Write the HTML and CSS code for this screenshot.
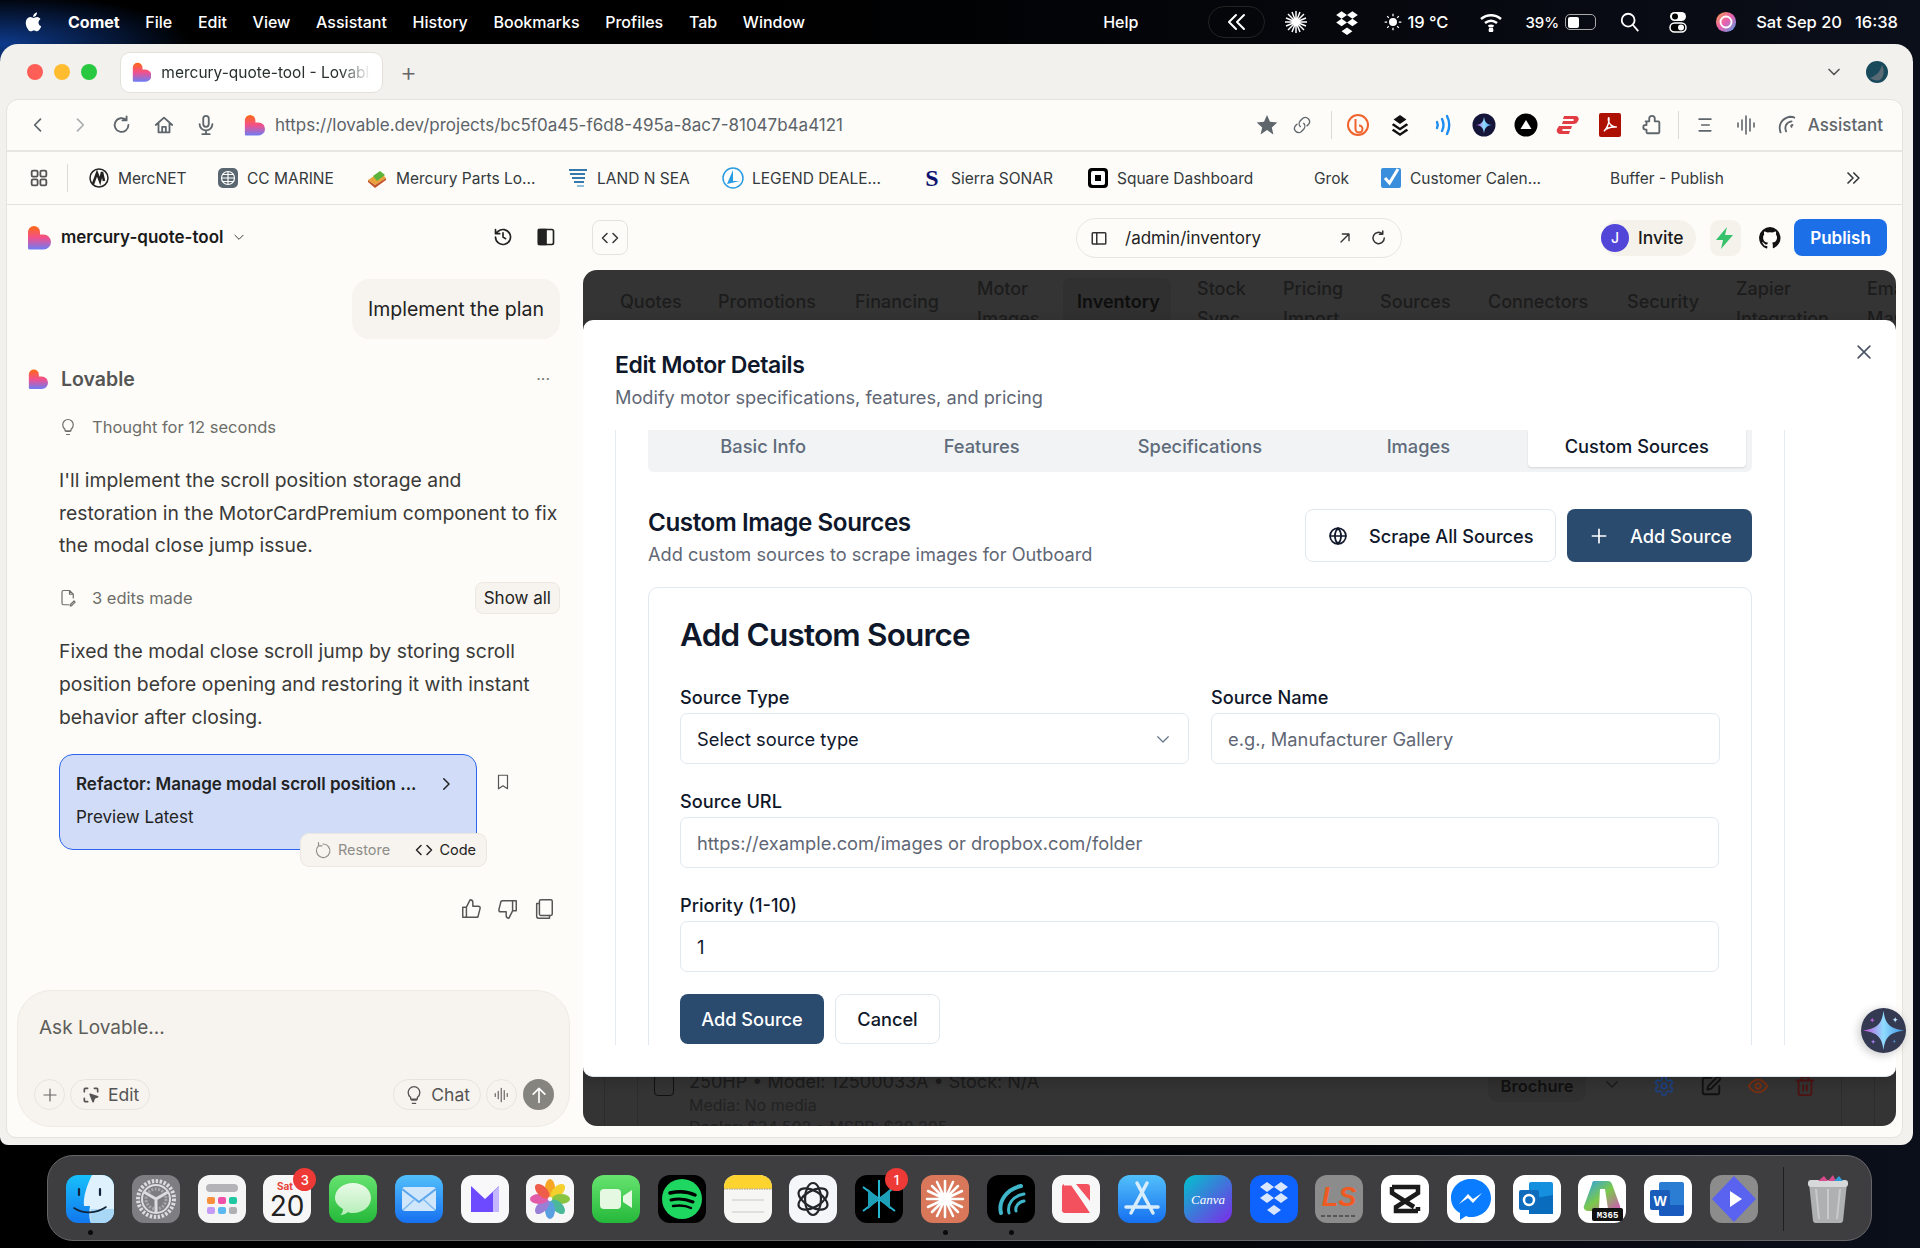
FILE: index.html
```html
<!DOCTYPE html>
<html lang="en">

<head>
    <meta charset="UTF-8">
    <meta name="viewport" content="width=device-width, initial-scale=1.0">
    <title>mercury-quote-tool - Lovable</title>
    <link rel="stylesheet" href="styles.css">
</head>

<body>
    <!-- shared shapes and gradients -->
    <svg class="sprite" aria-hidden="true">
        <defs>
            <linearGradient id="love" x1="0" y1="0" x2="0" y2="1">
                <stop offset="0" stop-color="#ff6a13" />
                <stop offset=".5" stop-color="#f2508c" />
                <stop offset="1" stop-color="#6d7cf5" />
            </linearGradient>
            <linearGradient id="skyblue" x1="0" y1="0" x2="0" y2="1">
                <stop offset="0" stop-color="#52c0fb" />
                <stop offset="1" stop-color="#1670f0" />
            </linearGradient>
            <linearGradient id="finder" x1="0" y1="0" x2="0" y2="1">
                <stop offset="0" stop-color="#17c0fb" />
                <stop offset="1" stop-color="#1277ee" />
            </linearGradient>
            <linearGradient id="green" x1="0" y1="0" x2="0" y2="1">
                <stop offset="0" stop-color="#66e36f" />
                <stop offset="1" stop-color="#25b83a" />
            </linearGradient>
            <linearGradient id="bubble" x1="0" y1="0" x2="0" y2="1">
                <stop offset="0" stop-color="#e9fae7" />
                <stop offset="1" stop-color="#b6eeb8" />
            </linearGradient>
            <linearGradient id="canva" x1="0" y1="0" x2="1" y2="1">
                <stop offset="0" stop-color="#00c4cc" />
                <stop offset="1" stop-color="#7d2ae8" />
            </linearGradient>
            <linearGradient id="copilot" x1="0" y1="0" x2="1" y2="1">
                <stop offset="0" stop-color="#2aa0f0" />
                <stop offset=".5" stop-color="#7bc94a" />
                <stop offset="1" stop-color="#d94fc0" />
            </linearGradient>
            <linearGradient id="siri" x1="0" y1="0" x2="1" y2="1">
                <stop offset="0" stop-color="#f7a04a" />
                <stop offset=".5" stop-color="#e85fb0" />
                <stop offset="1" stop-color="#4aa8f0" />
            </linearGradient>
            <linearGradient id="spark" x1="0" y1="0" x2="1" y2="0">
                <stop offset="0" stop-color="#c24fd6" />
                <stop offset=".5" stop-color="#8fdcff" />
                <stop offset="1" stop-color="#3c8fdc" />
            </linearGradient>
            <symbol id="heart" viewBox="0 0 24 24">
                <path fill="url(#love)" d="M1 6.500a6 6 0 0 1 12 0V9h3.500a7.500 7.500 0 0 1 0 15H2.500A1.500 1.500 0 0 1 1 22.500z" />
            </symbol>
            <symbol id="star4" viewBox="0 0 24 24">
                <path d="M12 1c1 7 3 10 11 11-8 1-10 4-11 11-1-7-3-10-11-11 8-1 10-4 11-11z" />
            </symbol>
        </defs>
    </svg>

    <header class="menubar">
        <svg class="apple" viewBox="0 0 20 24">
            <path fill="#fff" d="M14.500 12.500c0-2.400 2-3.500 2-3.600-1.100-1.600-2.800-1.800-3.400-1.900-1.500-.1-2.800.9-3.500.9s-1.900-.9-3.100-.9C4.900 7 3.400 8 2.600 9.400c-1.700 2.900-.4 7.200 1.200 9.500.8 1.200 1.700 2.400 3 2.400 1.200 0 1.600-.8 3.100-.8s1.800.8 3.100.8 2.100-1.100 2.900-2.300c.9-1.300 1.300-2.600 1.300-2.700-.1 0-2.700-1-2.700-3.800zM12 5.500c.7-.8 1.100-1.900 1-3-1 0-2.100.7-2.800 1.500-.6.700-1.100 1.800-1 2.900 1.100.1 2.200-.6 2.800-1.400z" />
        </svg>
        <nav class="menu">
            <strong>Comet</strong><span>File</span><span>Edit</span><span>View</span><span>Assistant</span><span>History</span><span>Bookmarks</span><span>Profiles</span><span>Tab</span><span>Window</span>
        </nav>
        <span class="help">Help</span>
        <div class="status">
            <span class="collapse-pill"><svg class="ico" viewBox="0 0 24 24" width="24" height="24">
                    <path d="M11 5l-7 7 7 7M19 5l-7 7 7 7" />
                </svg></span>
            <svg class="slot" viewBox="0 0 24 24" width="24" height="24" stroke="#fff" stroke-width="1.500">
                <path d="M12 1v22M1 12h22M4 4l16 16M20 4L4 20M8 2l8 20M16 2L8 22M2 8l20 8M22 8L2 16" />
            </svg>
            <svg class="slot drop" viewBox="0 0 24 24" width="26" height="26" fill="#fff">
                <path d="M7 2l5 3.500L7 9 2 5.500zM17 2l5 3.500L17 9l-5-3.500zM7 9l5 3.500L7 16l-5-3.500zM17 9l5 3.500L17 16l-5-3.500zM12 17l5 3.500-5 3.500-5-3.500z" />
            </svg>
            <span class="weather"><svg viewBox="0 0 24 24" width="20" height="20" fill="#fff" stroke="#fff" stroke-width="1.500">
                    <circle cx="12" cy="12" r="4" />
                    <path d="M12 2v3M12 19v3M2 12h3M19 12h3M5 5l2 2M17 17l2 2M19 5l-2 2M7 17l-2 2" />
                </svg>19 °C</span>
            <svg class="wifi" viewBox="0 0 24 20" width="26" height="20" fill="none" stroke="#fff" stroke-width="2.500">
                <path d="M2 7c6-5 14-5 20 0M6 11c4-3 8-3 12 0M9.500 14.500c2-1.300 3-1.300 5 0" />
                <circle cx="12" cy="18" r="1.200" fill="#fff" />
            </svg>
            <span class="batt-text">39%</span>
            <span class="battery"><i></i></span>
            <svg class="search" viewBox="0 0 24 24" width="22" height="22" fill="none" stroke="#fff" stroke-width="2">
                <circle cx="10" cy="10" r="7" />
                <path d="M15 15l6 7" />
            </svg>
            <svg class="toggles" viewBox="0 0 22 24" width="22" height="24">
                <rect x="3" y="2" width="16" height="9" rx="4.500" fill="#fff" />
                <circle cx="8" cy="6.500" r="3" fill="#000" />
                <rect x="3" y="13" width="16" height="9" rx="4.500" fill="#000" stroke="#fff" stroke-width="1.500" />
                <circle cx="14" cy="17.500" r="3" fill="#fff" />
            </svg>
            <svg class="siri" viewBox="0 0 24 24" width="22" height="22">
                <circle cx="12" cy="12" r="11" fill="url(#siri)" />
                <circle cx="12" cy="12" r="6" fill="none" stroke="#fff" stroke-width="2" />
            </svg>
            <span class="clock">Sat Sep 20</span><span class="clock-time">16:38</span>
        </div>
    </header>

    <div class="window">
        <div class="tabstrip">
            <span class="light red"></span><span class="light amber"></span><span class="light lime"></span>
            <div class="tab">
                <svg class="love" width="20" height="22">
                    <use href="#heart" />
                </svg>
                <span class="tab-title">mercury-quote-tool - Lovable</span>
            </div>
            <span class="new-tab">+</span>
            <svg class="tab-caret ico" viewBox="0 0 24 24" width="20" height="20">
                <path d="M6 9l6 6 6-6" />
            </svg>
            <svg class="profile" viewBox="0 0 24 24" width="24" height="24">
                <circle cx="12" cy="12" r="11" fill="#184a5c" />
                <path d="M5 18c6-2 10-6 12-13 3 5 2 12-2 15-3 1-7 0-10-2z" fill="#5a6a74" />
            </svg>
        </div>

        <div class="panel">
            <div class="toolbar">
                <span class="tool"><svg class="ico" viewBox="0 0 24 24" width="20" height="20">
                        <path d="M15 5l-7 7 7 7" />
                    </svg></span>
                <span class="tool dim"><svg class="ico" viewBox="0 0 24 24" width="20" height="20">
                        <path d="M9 5l7 7-7 7" />
                    </svg></span>
                <span class="tool"><svg class="ico" viewBox="0 0 24 24" width="22" height="22">
                        <path d="M19 12a7.500 7.500 0 1 1-2.500-5.600M17 2.500v4.500h-4.500" />
                    </svg></span>
                <span class="tool"><svg class="ico" viewBox="0 0 24 24" width="22" height="22">
                        <path d="M3 12l9-8 9 8M6 10v10h12V10M10 20v-6h4v6" />
                    </svg></span>
                <span class="tool"><svg class="ico" viewBox="0 0 24 24" width="22" height="22">
                        <rect x="9" y="2" width="6" height="12" rx="3" />
                        <path d="M5 11a7 7 0 0 0 14 0M12 18v4M8 22h8" />
                    </svg></span>
                <svg class="url-logo" width="21" height="24">
                    <use href="#heart" />
                </svg>
                <span class="url">https://lovable.dev/projects/bc5f0a45-f6d8-495a-8ac7-81047b4a4121</span>

                <div class="tool-right">
                    <span class="tool"><svg viewBox="0 0 24 24" width="24" height="24" fill="#5e656b">
                            <path d="M12 2l3 6.800 7.300.7-5.500 4.900 1.600 7.200L12 17l-6.400 4.600 1.600-7.200L1.700 9.500 9 8.800z" />
                        </svg></span>
                    <span class="tool narrow"><svg class="ico thin" viewBox="0 0 24 24" width="20" height="20">
                            <path d="M10 14a5 5 0 0 1 0-7l3-3a5 5 0 0 1 7 7l-2 2M14 10a5 5 0 0 1 0 7l-3 3a5 5 0 0 1-7-7l2-2" />
                        </svg></span>
                    <span class="vsep"></span>
                    <span class="tool"><svg viewBox="0 0 24 24" width="24" height="24" fill="none" stroke="#f0632e" stroke-width="2">
                            <circle cx="12" cy="12" r="10" />
                            <path d="M9.500 6v10a3.500 3.500 0 1 0 3.500-3.500" />
                        </svg></span>
                    <span class="tool"><svg viewBox="0 0 24 24" width="22" height="24" fill="#111">
                            <path d="M12 1l7 5-7 5-7-5zM5 10l7 5 7-5 2 2-9 6-9-6zM5 16l7 5 7-5 2 2-9 6-9-6z" />
                        </svg></span>
                    <span class="tool"><svg viewBox="0 0 24 24" width="24" height="24" fill="none" stroke="#1c8cf0" stroke-width="2.400" stroke-linecap="round">
                            <path d="M7 9c1 2 1 4 0 6M12 6c2 4 2 8 0 12M17 3c3 6 3 12 0 18" />
                        </svg></span>
                    <span class="tool"><svg viewBox="0 0 24 24" width="24" height="24">
                            <circle cx="12" cy="12" r="11.500" fill="#15153a" />
                            <use href="#star4" x="3" y="3" width="18" height="18" fill="url(#spark)" />
                        </svg></span>
                    <span class="tool"><svg viewBox="0 0 24 24" width="24" height="24">
                            <circle cx="12" cy="12" r="11.500" fill="#000" />
                            <path d="M12 7l5.500 9h-11z" fill="#fff" />
                        </svg></span>
                    <span class="tool"><svg viewBox="0 0 24 20" width="24" height="20" fill="#e23d44">
                            <path d="M8 1h12a3 3 0 0 1 2 5c-1 2-2 3-5 3H6l1-3h10c1 0 1-2 0-2H7zM3 11h13l-1 3H7c-1 0-1 2 0 2h7l-1 3H5c-3 0-5-2-4-5z" />
                        </svg></span>
                    <span class="tool"><svg viewBox="0 0 24 24" width="24" height="24">
                            <rect x="1" y="0" width="22" height="24" rx="2" fill="#ad0f00" />
                            <path d="M6 18c2-1 5-7 5-11s-1-2-.5 1 4 6 7 6-3-.5-7 1-4 3-4.500 3z" fill="none" stroke="#fff" stroke-width="1.500" />
                        </svg></span>
                    <span class="tool"><svg class="ico" viewBox="0 0 24 24" width="22" height="22">
                            <path d="M5 8h4V5a3 3 0 0 1 6 0v3h4a1 1 0 0 1 1 1v11a1 1 0 0 1-1 1H7a1 1 0 0 1-1-1v-3H5a2.500 2.500 0 0 1 0-5h1V9" />
                        </svg></span>
                    <span class="vsep"></span>
                    <span class="tool"><svg class="ico" viewBox="0 0 24 24" width="20" height="20">
                            <path d="M5 5h14M8 12h9M5 19h14" />
                        </svg></span>
                    <span class="tool"><svg class="ico thin" viewBox="0 0 24 24" width="24" height="24">
                            <path d="M3 10v4M7 7v10M11 3v18M15 6v12M19 10v4" />
                        </svg></span>
                    <svg class="ico assist-ico" viewBox="0 0 24 24" width="22" height="24">
                        <path d="M5 20c-3-8 1-15 10-17 2 0 4 0 5 1M11 19c-2-5 0-10 6-11M17 14c-1-1 0-2 1-2" />
                    </svg>
                    <span class="assistant">Assistant</span>
                </div>
            </div>

            <div class="bookmarks">
                <svg class="ico bm-grid" viewBox="0 0 24 24" width="22" height="22">
                    <rect x="4" y="4" width="6.500" height="6.500" rx="1.500" />
                    <rect x="13.500" y="4" width="6.500" height="6.500" rx="1.500" />
                    <rect x="4" y="13.500" width="6.500" height="6.500" rx="1.500" />
                    <rect x="13.500" y="13.500" width="6.500" height="6.500" rx="1.500" />
                </svg>
                <span class="vsep bm-sep"></span>
                <div class="bm-list">
                    <span class="bm"><svg viewBox="0 0 22 22" width="22" height="22" fill="none" stroke="#222" stroke-width="2.500">
                            <circle cx="11" cy="11" r="9" stroke-width="1.500" />
                            <path d="M5 17L9 6l3 8 2-9 2 9" />
                        </svg>MercNET</span>
                    <span class="bm"><svg viewBox="0 0 22 22" width="22" height="22">
                            <rect x="1" y="1" width="20" height="20" rx="5" fill="#5b6770" />
                            <g fill="none" stroke="#fff" stroke-width="1.200">
                                <circle cx="11" cy="11" r="6.500" />
                                <path d="M4.500 11h13M11 4.500v13M6 7.500h10M6 14.500h10" />
                            </g>
                        </svg>CC MARINE</span>
                    <span class="bm"><svg viewBox="0 0 22 22" width="22" height="22">
                            <path d="M2 13l12-8 6 6-11 7z" fill="#e8a33a" />
                            <path d="M7 9l7-5 5 4-8 6z" fill="#5cb33c" />
                            <path d="M2 13l7 5 11-7v2L9 21l-7-6z" fill="#c3552b" />
                        </svg>Mercury Parts Lo...</span>
                    <span class="bm"><svg viewBox="0 0 22 22" width="22" height="22" fill="none" stroke="#3579ac" stroke-width="2">
                            <path d="M2 3h18M3 7h15M5 11h13M7 15h10" />
                            <path d="M10 19h7" stroke="#8cc0de" />
                        </svg>LAND N SEA</span>
                    <span class="bm"><svg viewBox="0 0 22 22" width="22" height="22">
                            <circle cx="11" cy="11" r="10" fill="#fff" stroke="#2a9be0" stroke-width="1.500" />
                            <path d="M11 3L5 17l13-3-7 0z" fill="#2a9be0" />
                        </svg>LEGEND DEALE...</span>
                    <span class="bm"><b class="bm-s">S</b>Sierra SONAR</span>
                    <span class="bm"><svg viewBox="0 0 22 22" width="22" height="22">
                            <rect x="1" y="1" width="20" height="20" rx="4" fill="#000" />
                            <rect x="4" y="4" width="14" height="14" rx="2" fill="#fff" />
                            <rect x="8" y="8" width="6" height="6" fill="#000" />
                        </svg>Square Dashboard</span>
                    <span class="bm"><i class="bm-blank"></i>Grok</span>
                    <span class="bm"><svg viewBox="0 0 22 22" width="22" height="22">
                            <rect x="1" y="1" width="20" height="20" rx="2" fill="#3a8fdc" />
                            <path d="M5 11l4.500 5L18 2" fill="none" stroke="#fff" stroke-width="3" />
                        </svg>Customer Calen...</span>
                    <span class="bm"><i class="bm-blank"></i>Buffer - Publish</span>
                    <svg class="ico" viewBox="0 0 24 24" width="20" height="20">
                        <path d="M6 6l6 6-6 6M13 6l6 6-6 6" />
                    </svg>
                </div>
            </div>

            <div class="app">
                <!-- chat column -->
                <aside class="chat">
                    <div class="chat-head">
                        <svg class="chat-logo" width="24" height="25">
                            <use href="#heart" />
                        </svg>
                        <span class="project">mercury-quote-tool</span>
                        <svg class="ico thin" viewBox="0 0 24 24" width="14" height="14">
                            <path d="M5 9l7 7 7-7" />
                        </svg>
                        <svg class="ico head-history" viewBox="0 0 24 24" width="20" height="20">
                            <path d="M3 12a9 9 0 1 0 3-6.700L3 8M3 3v5h5M12 7v5l3 2" />
                        </svg>
                        <svg class="ico head-side" viewBox="0 0 24 24" width="20" height="20">
                            <rect x="3" y="3" width="18" height="18" rx="2" />
                            <rect x="3" y="3" width="9" height="18" fill="currentColor" />
                        </svg>
                    </div>

                    <div class="bubble">Implement the plan</div>

                    <div class="who">
                        <svg width="20" height="20">
                            <use href="#heart" />
                        </svg>
                        <span class="who-name">Lovable</span>
                        <span class="who-more">···</span>
                    </div>

                    <div class="thought">
                        <svg class="ico thin" viewBox="0 0 24 24" width="18" height="20">
                            <path d="M9 18h6M10 22h4M8 15c-2-1.500-3-3.500-3-6a7 7 0 0 1 14 0c0 2.500-1 4.500-3 6v2H8z" />
                        </svg>
                        Thought for 12 seconds
                    </div>

                    <p class="msg">I'll implement the scroll position storage and restoration in the MotorCardPremium component to fix the modal close jump issue.</p>

                    <div class="edits">
                        <svg class="ico thin" viewBox="0 0 24 24" width="18" height="20">
                            <path d="M13 21H6a2 2 0 0 1-2-2V4a2 2 0 0 1 2-2h8l5 5v5M14 2v5h5M15 21l5-5 1.500 1.500-5 5H15z" />
                        </svg>
                        <span class="edits-text">3 edits made</span>
                        <span class="show-all">Show all</span>
                    </div>

                    <p class="msg second">Fixed the modal close scroll jump by storing scroll position before opening and restoring it with instant behavior after closing.</p>

                    <div class="version-row">
                        <div class="version">
                            <div class="version-top">
                                <strong>Refactor: Manage modal scroll position ...</strong>
                                <svg class="ico" viewBox="0 0 24 24" width="18" height="18">
                                    <path d="M9 5l7 7-7 7" />
                                </svg>
                            </div>
                            <span class="version-sub">Preview Latest</span>
                            <div class="version-actions">
                                <span class="restore"><svg class="ico thin" viewBox="0 0 24 24" width="18" height="18">
                                        <path d="M12 4a9 9 0 1 1-6 2.500M6 2v4.500h4.500" />
                                    </svg>Restore</span>
                                <span class="code"><svg class="ico" viewBox="0 0 24 24" width="18" height="18">
                                        <path d="M8 6l-6 6 6 6M16 6l6 6-6 6" />
                                    </svg>Code</span>
                            </div>
                        </div>
                        <svg class="ico thin" viewBox="0 0 24 24" width="18" height="20">
                            <path d="M6 3h12v18l-6-4-6 4z" />
                        </svg>
                    </div>

                    <div class="msg-actions">
                        <svg class="ico thin" viewBox="0 0 24 24" width="22" height="22">
                            <path d="M7 10v11H3V10zM7 10l4-8c2 0 3 1 3 3v4h6a2 2 0 0 1 2 2l-2 8a2 2 0 0 1-2 2H7" />
                        </svg>
                        <svg class="ico thin" viewBox="0 0 24 24" width="22" height="22">
                            <path d="M17 14V3h4v11zM17 14l-4 8c-2 0-3-1-3-3v-4H4a2 2 0 0 1-2-2l2-8a2 2 0 0 1 2-2h11" />
                        </svg>
                        <svg class="ico thin" viewBox="0 0 24 24" width="22" height="22">
                            <rect x="7" y="2" width="14" height="17" rx="1.500" />
                            <path d="M7 6H4v14a2 2 0 0 0 2 2h12v-3" />
                        </svg>
                    </div>

                    <div class="composer">
                        <div class="ask">Ask Lovable...</div>
                        <div class="composer-bar">
                            <span class="round"><svg class="ico thin" viewBox="0 0 24 24" width="18" height="18">
                                    <path d="M12 4v16M4 12h16" />
                                </svg></span>
                            <span class="chip edit-chip"><svg class="ico" viewBox="0 0 24 24" width="20" height="20">
                                    <path d="M4 8V5a1 1 0 0 1 1-1h3M16 4h3a1 1 0 0 1 1 1v3M4 16v3a1 1 0 0 0 1 1h3" />
                                    <path d="M11 11l9 3-4 1.500-1.500 4.500z" fill="currentColor" />
                                </svg>Edit</span>
                            <span class="chip chat-chip"><svg class="ico thin" viewBox="0 0 24 24" width="20" height="20">
                                    <path d="M9 18h6M10 22h4M8 15c-2-1.500-3-3.500-3-6a7 7 0 0 1 14 0c0 2.500-1 4.500-3 6v2H8z" />
                                </svg>Chat</span>
                            <span class="round"><svg class="ico thin" viewBox="0 0 24 24" width="18" height="18">
                                    <path d="M3 10v4M7 7v10M11 3v18M15 6v12M19 10v4" />
                                </svg></span>
                            <span class="send"><svg class="ico white" viewBox="0 0 24 24" width="20" height="20">
                                    <path d="M12 21V4M5 11l7-7 7 7" />
                                </svg></span>
                        </div>
                    </div>
                </aside>

                <!-- preview column -->
                <section class="stage">
                    <div class="stage-bar">
                        <span class="code-btn"><svg class="ico" viewBox="0 0 24 24" width="18" height="18">
                                <path d="M8 6l-6 6 6 6M16 6l6 6-6 6" />
                            </svg></span>
                        <div class="addr">
                            <svg class="ico" viewBox="0 0 24 24" width="18" height="18">
                                <rect x="3" y="5" width="18" height="15" rx="1" />
                                <path d="M9 5v15" />
                            </svg>
                            <span class="addr-text">/admin/inventory</span>
                            <svg class="ico addr-out" viewBox="0 0 24 24" width="16" height="16">
                                <path d="M6 18L18 6M8 6h10v10" />
                            </svg>
                            <svg class="ico" viewBox="0 0 24 24" width="18" height="18">
                                <path d="M19 12a7.500 7.500 0 1 1-2.500-5.600M17 2.500v4.500h-4.500" />
                            </svg>
                        </div>
                        <div class="invite"><span class="avatar">J</span>Invite</div>
                        <span class="bolt"><svg viewBox="0 0 24 24" width="24" height="24" fill="#35c26b">
                                <path d="M14 1L3 14h7l-2 9 12-14h-8z" />
                            </svg></span>
                        <svg class="github" viewBox="0 0 24 24" width="24" height="24" fill="#111">
                            <path d="M12 1a11 11 0 0 0-3.500 21.400c.6.100.8-.2.800-.5v-2c-3.100.7-3.700-1.400-3.700-1.400-.5-1.300-1.200-1.600-1.200-1.600-1-.7.1-.7.100-.7 1.100.1 1.700 1.100 1.700 1.100 1 1.700 2.600 1.200 3.200.9.100-.7.400-1.200.7-1.500-2.400-.3-5-1.200-5-5.400 0-1.200.4-2.200 1.100-2.900-.1-.3-.5-1.400.1-2.900 0 0 .9-.3 3 1.100a10.400 10.400 0 0 1 5.500 0c2.100-1.400 3-1.100 3-1.100.6 1.500.2 2.600.1 2.900.7.800 1.100 1.700 1.100 2.900 0 4.200-2.600 5.100-5 5.400.4.300.8 1 .8 2v3c0 .3.200.6.800.5A11 11 0 0 0 12 1z" />
                        </svg>
                        <span class="publish">Publish</span>
                    </div>

                    <div class="preview">
                        <nav class="dark-nav">
                            <span>Quotes</span><span>Promotions</span><span>Financing</span><span>Motor Images</span><span class="on">Inventory</span><span>Stock Sync</span><span>Pricing Import</span><span>Sources</span><span>Connectors</span><span>Security</span><span>Zapier Integration</span><span>Email Management</span>
                        </nav>

                        <div class="dark-list">
                            <div class="dark-row">
                                <i class="dark-check"></i>
                                <div class="dark-info">
                                    <div>250HP • Model: 12500033A • Stock: N/A</div>
                                    <div class="dark-small">Media: No media</div>
                                    <div class="dark-small">Dealer: $34,502 • MSRP: $39,205</div>
                                </div>
                                <span class="dark-pill">Brochure</span>
                                <svg class="ico dark-caret" viewBox="0 0 24 24" width="18" height="18">
                                    <path d="M5 9l7 7 7-7" />
                                </svg>
                                <svg class="ico d-gear" viewBox="0 0 24 24" width="22" height="22">
                                    <path d="M12.220 2h-.44a2 2 0 0 0-2 2v.18a2 2 0 0 1-1 1.730l-.43.25a2 2 0 0 1-2 0l-.15-.08a2 2 0 0 0-2.730.73l-.22.38a2 2 0 0 0 .73 2.730l.15.1a2 2 0 0 1 1 1.720v.51a2 2 0 0 1-1 1.740l-.15.09a2 2 0 0 0-.73 2.730l.22.38a2 2 0 0 0 2.730.73l.15-.08a2 2 0 0 1 2 0l.43.25a2 2 0 0 1 1 1.730V20a2 2 0 0 0 2 2h.44a2 2 0 0 0 2-2v-.18a2 2 0 0 1 1-1.730l.43-.25a2 2 0 0 1 2 0l.15.08a2 2 0 0 0 2.730-.73l.22-.39a2 2 0 0 0-.73-2.730l-.15-.08a2 2 0 0 1-1-1.740v-.5a2 2 0 0 1 1-1.740l.15-.09a2 2 0 0 0 .73-2.730l-.22-.38a2 2 0 0 0-2.730-.73l-.15.08a2 2 0 0 1-2 0l-.43-.25a2 2 0 0 1-1-1.730V4a2 2 0 0 0-2-2z" />
                                    <circle cx="12" cy="12" r="3" />
                                </svg>
                                <svg class="ico d-edit" viewBox="0 0 24 24" width="22" height="22">
                                    <path d="M12 3H5a2 2 0 0 0-2 2v14a2 2 0 0 0 2 2h14a2 2 0 0 0 2-2v-7" />
                                    <path d="M18.400 2.600a1 1 0 0 1 3 3l-9 9a2 2 0 0 1-.85.5l-2.900.85a.5.5 0 0 1-.6-.6l.84-2.900a2 2 0 0 1 .5-.85z" />
                                </svg>
                                <svg class="ico d-eye" viewBox="0 0 24 24" width="22" height="22">
                                    <path d="M2 12s3.500-7 10-7 10 7 10 7-3.500 7-10 7-10-7-10-7z" />
                                    <circle cx="12" cy="12" r="3" />
                                </svg>
                                <svg class="ico d-trash" viewBox="0 0 24 24" width="22" height="22">
                                    <path d="M3 6h18M19 6v14a2 2 0 0 1-2 2H7a2 2 0 0 1-2-2V6M8 6V4a2 2 0 0 1 2-2h4a2 2 0 0 1 2 2v2M10 11v6M14 11v6" />
                                </svg>
                            </div>
                        </div>

                        <!-- dialog on top of the dimmed page -->
                        <div class="modal">
                            <div class="modal-head">
                                <h2>Edit Motor Details</h2>
                                <p>Modify motor specifications, features, and pricing</p>
                                <svg class="ico modal-x" viewBox="0 0 24 24" width="20" height="20">
                                    <path d="M5 5l14 14M19 5L5 19" />
                                </svg>
                            </div>
                            <div class="modal-scroll">
                                <div class="modal-card">
                                    <div class="tabs">
                                        <span>Basic Info</span><span>Features</span><span>Specifications</span><span>Images</span><span class="active">Custom Sources</span>
                                    </div>

                                    <div class="source-head">
                                        <div>
                                            <h3>Custom Image Sources</h3>
                                            <p>Add custom sources to scrape images for Outboard</p>
                                        </div>
                                        <div class="source-btns">
                                            <span class="btn outline"><svg class="ico" viewBox="0 0 24 24" width="20" height="20">
                                                    <circle cx="12" cy="12" r="9.500" />
                                                    <path d="M2.500 12h19M12 2.500c-5 5-5 14 0 19M12 2.500c5 5 5 14 0 19" />
                                                </svg>Scrape All Sources</span>
                                            <span class="btn solid"><svg class="ico white" viewBox="0 0 24 24" width="20" height="20">
                                                    <path d="M12 4v16M4 12h16" />
                                                </svg>Add Source</span>
                                        </div>
                                    </div>

                                    <form class="form-card">
                                        <h3>Add Custom Source</h3>
                                        <div class="form-two">
                                            <div class="field">
                                                <label>Source Type</label>
                                                <div class="input select">Select source type
                                                    <svg class="ico thin" viewBox="0 0 24 24" width="18" height="18">
                                                        <path d="M5 9l7 7 7-7" />
                                                    </svg>
                                                </div>
                                            </div>
                                            <div class="field">
                                                <label>Source Name</label>
                                                <div class="input ph">e.g., Manufacturer Gallery</div>
                                            </div>
                                        </div>
                                        <div class="field">
                                            <label>Source URL</label>
                                            <div class="input ph">https://example.com/images or dropbox.com/folder</div>
                                        </div>
                                        <div class="field">
                                            <label>Priority (1-10)</label>
                                            <div class="input">1</div>
                                        </div>
                                        <div class="form-btns">
                                            <span class="btn solid plain">Add Source</span>
                                            <span class="btn outline plain">Cancel</span>
                                        </div>
                                    </form>
                                </div>
                            </div>
                        </div>
                    </div>
                </section>
            </div>
        </div>
    </div>

    <!-- floating helper over the window corner -->
    <div class="float-star">
        <svg viewBox="0 0 48 48" width="45" height="45">
            <circle cx="24" cy="24" r="24" fill="#343a52" />
            <path d="M24 3c1.500 13 6 19 22 21-16 2-20.500 8-22 21-1.500-13-6-19-22-21 16-2 20.500-8 22-21z" fill="url(#spark)" />
            <use href="#star4" x="33" y="9" width="7" height="7" fill="#bfe4ff" />
            <use href="#star4" x="9" y="10" width="6" height="6" fill="#b95fd8" />
            <use href="#star4" x="10" y="33" width="6" height="6" fill="#a97cf0" />
            <use href="#star4" x="33" y="33" width="5" height="5" fill="#4e8fd0" />
        </svg>
    </div>

    <footer class="dock">
        <svg viewBox="0 0 48 48">
            <rect width="48" height="48" rx="12" fill="url(#finder)" />
            <path d="M26 0h10a12 12 0 0 1 12 12v24a12 12 0 0 1-12 12H25c-2-4-2-10-1-17h-6c-1-9 3-21 8-31z" fill="#dff1fc" />
            <path d="M25 34h23v2a12 12 0 0 1-12 12H25c-1-4-1-9 0-14z" fill="#a9d8f7" />
            <path d="M8 33c9 6 22 6 32-1" fill="none" stroke="#12243a" stroke-width="1.600" stroke-linecap="round" />
            <path d="M13 14v6M34 14v6" stroke="#12243a" stroke-width="2.200" stroke-linecap="round" />
        </svg>
        <svg viewBox="0 0 48 48">
            <rect width="48" height="48" rx="12" fill="#7e7e82" />
            <circle cx="24" cy="24" r="18" fill="none" stroke="#dcdcdf" stroke-width="4" stroke-dasharray="2.400 1.600" />
            <circle cx="24" cy="24" r="14" fill="none" stroke="#dcdcdf" stroke-width="2" />
            <circle cx="24" cy="24" r="10" fill="none" stroke="#a8a8ac" stroke-width="3" stroke-dasharray="2 1.500" />
            <path d="M24 24V38M24 24L12 17M24 24l12-7" stroke="#dcdcdf" stroke-width="3" />
        </svg>
        <svg viewBox="0 0 48 48">
            <rect width="48" height="48" rx="12" fill="#f5f5f6" />
            <rect x="8" y="9" width="32" height="8" rx="4" fill="#b4b4b8" />
            <rect x="9" y="22" width="8" height="7" rx="2" fill="#f78f3c" />
            <rect x="20" y="22" width="8" height="7" rx="2" fill="#f050a8" />
            <rect x="31" y="22" width="8" height="7" rx="2" fill="#1fc8a0" />
            <rect x="9" y="32" width="8" height="7" rx="2" fill="#c49cf5" />
            <rect x="20" y="32" width="8" height="7" rx="2" fill="#5cb8f0" />
            <rect x="31" y="32" width="8" height="7" rx="2" fill="#b0b0b2" />
        </svg>
        <div class="dock-cal">
            <svg viewBox="0 0 48 48">
                <rect width="48" height="48" rx="12" fill="#f7f7f7" />
                <text x="22" y="15" class="cal-day">Sat</text>
                <text x="24" y="41" class="cal-num">20</text>
            </svg>
            <span class="badge">3</span>
        </div>
        <svg viewBox="0 0 48 48">
            <rect width="48" height="48" rx="12" fill="url(#green)" />
            <path d="M24 8c10 0 18 6.500 18 15s-8 15-18 15c-2 0-3 0-5-1-2 2-5 3-8 3 2-1 3-4 3-6-5-3-8-7-8-11C6 14.500 14 8 24 8z" fill="url(#bubble)" />
        </svg>
        <svg viewBox="0 0 48 48">
            <rect width="48" height="48" rx="12" fill="url(#skyblue)" />
            <rect x="7" y="12" width="34" height="24" rx="3" fill="#cfe6fb" />
            <path d="M7 14l17 13 17-13" fill="none" stroke="#5aa5ee" stroke-width="2" />
            <path d="M8 35l12-11M40 35L28 24" stroke="#7fbaf2" stroke-width="1.500" />
        </svg>
        <svg viewBox="0 0 48 48">
            <rect width="48" height="48" rx="12" fill="#f8f8fa" />
            <path d="M10 11l14 13 14-13v26H10z" fill="#6d4aff" />
            <path d="M38 11v26h-6V17z" fill="#c4b6ff" />
        </svg>
        <svg class="photos" viewBox="0 0 48 48">
            <rect width="48" height="48" rx="12" fill="#f7f7f7" />
            <g>
                <ellipse cx="24" cy="13" rx="5" ry="9" fill="#f6a623" />
                <ellipse cx="24" cy="13" rx="5" ry="9" fill="#f5cf2e" transform="rotate(45 24 24)" />
                <ellipse cx="24" cy="13" rx="5" ry="9" fill="#8ac541" transform="rotate(90 24 24)" />
                <ellipse cx="24" cy="13" rx="5" ry="9" fill="#4bb89a" transform="rotate(135 24 24)" />
                <ellipse cx="24" cy="13" rx="5" ry="9" fill="#5a9fe0" transform="rotate(180 24 24)" />
                <ellipse cx="24" cy="13" rx="5" ry="9" fill="#9a7fd6" transform="rotate(225 24 24)" />
                <ellipse cx="24" cy="13" rx="5" ry="9" fill="#e05ca8" transform="rotate(270 24 24)" />
                <ellipse cx="24" cy="13" rx="5" ry="9" fill="#ee5d4a" transform="rotate(315 24 24)" />
            </g>
        </svg>
        <svg viewBox="0 0 48 48">
            <rect width="48" height="48" rx="12" fill="url(#green)" />
            <rect x="8" y="14" width="21" height="20" rx="4" fill="#e4f8e2" />
            <path d="M31 21l9-6v18l-9-6z" fill="#e4f8e2" />
        </svg>
        <svg viewBox="0 0 48 48">
            <rect width="48" height="48" rx="12" fill="#000" />
            <circle cx="24" cy="24" r="20" fill="#1ed760" />
            <g fill="none" stroke="#000" stroke-linecap="round">
                <path d="M12 18c8-2 17-2 25 2" stroke-width="3.500" />
                <path d="M13 25c7-2 15-1 22 2" stroke-width="3" />
                <path d="M15 31c6-1 12-1 18 2" stroke-width="2.500" />
            </g>
        </svg>
        <svg viewBox="0 0 48 48">
            <rect width="48" height="48" rx="12" fill="#f6f6f4" />
            <path d="M0 14V12A12 12 0 0 1 12 0h24a12 12 0 0 1 12 12v2z" fill="#fdd32f" />
            <path d="M0 14h48" stroke="#b9b39b" stroke-width="1.500" stroke-dasharray="1.500 1" />
            <path d="M8 25h32M8 37h32" stroke="#c8c8c6" stroke-width="1" />
        </svg>
        <svg viewBox="0 0 48 48">
            <rect width="48" height="48" rx="12" fill="#f4f6fa" />
            <g fill="none" stroke="#23262b" stroke-width="2.200">
                <ellipse cx="24" cy="24" rx="8" ry="16" />
                <ellipse cx="24" cy="24" rx="8" ry="16" transform="rotate(60 24 24)" />
                <ellipse cx="24" cy="24" rx="8" ry="16" transform="rotate(120 24 24)" />
            </g>
        </svg>
        <div class="dock-cal">
            <svg viewBox="0 0 48 48">
                <rect width="48" height="48" rx="12" fill="#000" />
                <path d="M24 5v38M8 12l16 12 16-12M8 36l16-12 16 12" stroke="#26b6cf" stroke-width="2" />
                <path d="M13 14l11 10 11-10v20L24 24 13 34z" fill="#1d9fb8" />
            </svg>
            <span class="badge">1</span>
        </div>
        <svg viewBox="0 0 48 48">
            <rect width="48" height="48" rx="12" fill="#d9775a" />
            <path d="M24 6v36M6 24h36M11 11l26 26M37 11L11 37M16 7l16 34M32 7L16 41M7 16l34 16M41 16L7 32" stroke="#fff" stroke-width="2.500" stroke-linecap="round" />
        </svg>
        <svg viewBox="0 0 48 48">
            <rect width="48" height="48" rx="12" fill="#000" />
            <g fill="none" stroke="#3fb5c9" stroke-width="4" stroke-linecap="round">
                <path d="M14 38c-3-12 6-24 20-27" />
                <path d="M22 38c-2-8 3-17 15-19" stroke-width="3" />
                <path d="M29 36c-1-4 2-9 8-10" stroke-width="3" />
            </g>
        </svg>
        <svg viewBox="0 0 48 48">
            <rect width="48" height="48" rx="12" fill="#f7f7f7" />
            <path d="M10 34V12a3 3 0 0 1 3-3h6l19 29h-25a3 3 0 0 1-3-4z" fill="#f4515f" />
            <path d="M24 9h11a3 3 0 0 1 3 3v14z" fill="#f4515f" />
            <path d="M12 9h8l19 27" fill="none" stroke="#f7f7f7" stroke-width="3" />
        </svg>
        <svg viewBox="0 0 48 48">
            <rect width="48" height="48" rx="12" fill="url(#skyblue)" />
            <path d="M29 8L13 38M19 8l16 30M8 32h32" stroke="#d7ecfd" stroke-width="3.500" stroke-linecap="round" />
        </svg>
        <svg viewBox="0 0 48 48">
            <rect width="48" height="48" rx="12" fill="url(#canva)" />
            <text x="24" y="29" class="canva">Canva</text>
        </svg>
        <svg viewBox="0 0 48 48">
            <rect width="48" height="48" rx="12" fill="#0e62fe" />
            <g fill="#d8e6ff">
                <path d="M17 7l7 5-7 5-7-5zM31 7l7 5-7 5-7-5zM17 18l7 5-7 5-7-5zM31 18l7 5-7 5-7-5zM24 30l7 5-7 5-7-5z" />
            </g>
        </svg>
        <svg viewBox="0 0 48 48">
            <rect width="48" height="48" rx="12" fill="#8c8c8c" />
            <text x="24" y="31" class="ls">LS</text>
            <path d="M6 41h36" stroke="#444" stroke-width="1.500" stroke-dasharray="4 2" />
        </svg>
        <svg viewBox="0 0 48 48">
            <rect width="48" height="48" rx="12" fill="#fff" />
            <path d="M11 12h26v6L15 32v4h22M11 12v6l22 14M37 36v-4" fill="none" stroke="#1b1b1b" stroke-width="4.500" />
        </svg>
        <svg viewBox="0 0 48 48">
            <rect width="48" height="48" rx="12" fill="#fff" />
            <path d="M24 4c11 0 20 8 20 19S35 42 24 42c-2 0-3 0-5-1l-6 4v-7C7 35 4 29 4 23 4 12 13 4 24 4z" fill="#0a7cff" />
            <path d="M12 29l9-10 5 5 9-6-9 10-5-5z" fill="#fff" />
        </svg>
        <svg viewBox="0 0 48 48">
            <rect width="48" height="48" rx="12" fill="#fff" />
            <rect x="16" y="7" width="24" height="32" rx="2" fill="#1490df" />
            <path d="M16 24l24-4v19H16z" fill="#0a6cbd" />
            <rect x="6" y="15" width="20" height="20" rx="2" fill="#0f6cbd" />
            <circle cx="16" cy="25" r="5" fill="none" stroke="#fff" stroke-width="2.500" />
        </svg>
        <svg viewBox="0 0 48 48">
            <rect width="48" height="48" rx="12" fill="#fff" />
            <path d="M16 6h14c2 0 3 1 4 3l8 22c1 3-1 5-4 5H10c-3 0-5-3-4-5l8-22c0-2 1-3 2-3z" fill="url(#copilot)" />
            <path d="M22 14h5l3 20h-9z" fill="#fff" />
            <rect x="14" y="33" width="31" height="13" rx="2" fill="#111" />
            <text x="29.500" y="43" class="m365">M365</text>
        </svg>
        <svg viewBox="0 0 48 48">
            <rect width="48" height="48" rx="12" fill="#fff" />
            <rect x="15" y="7" width="25" height="34" rx="2" fill="#2b7cd3" />
            <path d="M15 30h25v9a2 2 0 0 1-2 2H17a2 2 0 0 1-2-2z" fill="#185abd" />
            <rect x="6" y="15" width="20" height="20" rx="2" fill="#1a5cba" />
            <text x="16" y="31" class="word">W</text>
        </svg>
        <svg viewBox="0 0 48 48">
            <rect width="48" height="48" rx="12" fill="#8c8c8c" />
            <path d="M24 1l22 23-22 23L2 24z" fill="#5a63f0" />
            <path d="M20 16l12 8-12 8z" fill="#fff" />
        </svg>
        <span class="dock-sep"></span>
        <svg class="trash" viewBox="0 0 48 48">
            <path d="M5 8h38l-4 38a3 3 0 0 1-3 2H12a3 3 0 0 1-3-2z" fill="#aeb0b2" />
            <path d="M12 14l3 30M24 14v30M36 14l-3 30" stroke="#c8cacc" stroke-width="2" />
            <rect x="4" y="5" width="40" height="7" rx="3" fill="#d6d8da" />
            <path d="M14 6l6-5 4 5zM24 6l5-6 3 6z" fill="#d64b8c" />
            <path d="M30 6l5-5 4 5z" fill="#2f9bd8" />
        </svg>
        <i class="dot dot-a"></i><i class="dot dot-b"></i><i class="dot dot-c"></i>
    </footer>
</body>

</html>
```

FILE: styles.css
```css
* {
    box-sizing: border-box;
}

html,
body {
    margin: 0;
    height: 100%;
}

body {
    position: relative;
    width: 1920px;
    height: 1248px;
    overflow: hidden;
    display: flex;
    flex-direction: column;
    font-family: Inter, "Liberation Sans", sans-serif;
    color: #1a1a1a;
    background:
        radial-gradient(ellipse 190px 50px at 0 44px, #0e3a8c, rgba(14, 58, 140, 0) 100%),
        linear-gradient(90deg, #000 40%, #0b0f1a);
}

p,
h2,
h3 {
    margin: 0;
}

.sprite {
    display: block;
    width: 0;
    height: 0;
    overflow: hidden;
}

.ico {
    fill: none;
    stroke: currentColor;
    stroke-width: 2;
    stroke-linecap: round;
    stroke-linejoin: round;
    flex: none;
}

.ico.thin {
    stroke-width: 1.6;
}

.ico.white {
    color: #fff;
}

/* mac menu bar */
.menubar {
    flex: none;
    height: 44px;
    display: flex;
    align-items: center;
    color: #fff;
    font-size: 16px;
    font-weight: 500;
}

.apple {
    width: 20px;
    height: 24px;
    margin-left: 24px;
}

.menu {
    display: flex;
    gap: 25.7px;
    margin-left: 24px;
}

.menu strong {
    font-weight: 700;
}

.help {
    flex: none;
    margin-left: 298px;
}

.status {
    display: flex;
    align-items: center;
    margin-left: auto;
    padding-right: 22px;
    font-size: 16.5px;
}

.collapse-pill {
    width: 57px;
    height: 32px;
    border: 1px solid #222;
    border-radius: 16px;
    display: flex;
    align-items: center;
    justify-content: center;
    margin-right: 19px;
}

.slot {
    margin-right: 26px;
}

.slot.drop {
    margin-right: 23px;
}

.weather {
    display: flex;
    align-items: center;
    gap: 4px;
}

.wifi {
    margin-left: 30px;
}

.batt-text {
    margin-left: 21px;
    font-size: 15px;
}

.battery {
    width: 31px;
    height: 16px;
    margin-left: 6px;
    border: 1.5px solid #aaa;
    border-radius: 5px;
    padding: 1.5px;
    display: block;
}

.battery i {
    display: block;
    width: 11px;
    height: 100%;
    background: #fff;
    border-radius: 2px;
}

.search {
    margin-left: 23px;
}

.toggles {
    margin-left: 26px;
}

.siri {
    margin-left: 26px;
}

.clock {
    margin-left: 19px;
}

.clock-time {
    margin-left: 13px;
}

/* browser window */
.window {
    flex: none;
    width: 1913px;
    height: 1101px;
    background: #f2f1ee;
    border-radius: 18px 18px 12px 8px;
    display: flex;
    flex-direction: column;
}

.tabstrip {
    flex: none;
    height: 55px;
    display: flex;
    align-items: center;
    padding: 0 24px 0 27px;
}

.light {
    width: 16px;
    height: 16px;
    border-radius: 50%;
    margin-right: 11px;
}

.light.red {
    background: #ff5f57;
}

.light.amber {
    background: #febc2e;
}

.light.lime {
    background: #28c840;
    margin-right: 23px;
}

.tab {
    width: 263px;
    height: 41px;
    margin-top: 1px;
    background: #fff;
    border: 1px solid #e3e1da;
    border-radius: 10px;
    display: flex;
    align-items: center;
    padding: 0 11px;
    gap: 10px;
    overflow: hidden;
}

.tab-title {
    font-size: 15.5px;
    white-space: nowrap;
    overflow: hidden;
    color: #27302e;
    -webkit-mask-image: linear-gradient(90deg, #000 85%, transparent);
    mask-image: linear-gradient(90deg, #000 85%, transparent);
}

.new-tab {
    margin-left: 17px;
    font-size: 26px;
    font-weight: 300;
    color: #666;
}

.tab-caret {
    margin-left: auto;
    color: #555;
    margin-right: 21px;
}

.panel {
    flex: none;
    height: 1039px;
    margin: 0 10px 0 6px;
    background: #fdfcf8;
    border: 1px solid #e5e3dd;
    border-radius: 12px 12px 10px 10px;
    display: flex;
    flex-direction: column;
    overflow: hidden;
}

.toolbar {
    flex: none;
    height: 52px;
    display: flex;
    align-items: center;
    padding-left: 10px;
    border-bottom: 2px solid #e8e6e0;
    color: #5e656b;
}

.tool {
    width: 42px;
    display: flex;
    justify-content: center;
    flex: none;
}

.tool.dim {
    color: #a9adb0;
}

.tool.narrow {
    width: 28px;
    margin-right: 10px;
}

.url-logo {
    margin-left: 17px;
}

.url {
    margin-left: 10px;
    font-size: 17px;
    color: #5c6368;
    white-space: nowrap;
}

.tool-right {
    margin-left: auto;
    display: flex;
    align-items: center;
    padding-right: 19px;
}

.vsep {
    width: 1px;
    height: 28px;
    background: #dcdad4;
    margin: 0 5px;
    flex: none;
}

.assist-ico {
    margin-left: 8px;
}

.assistant {
    margin-left: 10px;
    font-size: 17px;
    font-weight: 500;
}

.bookmarks {
    flex: none;
    height: 53px;
    display: flex;
    align-items: center;
    padding-left: 21px;
    border-bottom: 1px solid #e5e3dd;
    color: #34393c;
    font-size: 15.5px;
}

.bm-grid {
    color: #555;
}

.bm-sep {
    margin: 0 0 0 17px;
}

.bm-list {
    display: grid;
    grid-template-columns: 129px 149px 201px 155px 199px 166px 198px 95px 201px 262px auto;
    align-items: center;
    margin-left: 20px;
}

.bm {
    display: flex;
    align-items: center;
    gap: 8px;
    white-space: nowrap;
}

.bm-s {
    width: 22px;
    text-align: center;
    font: 900 24px "Liberation Serif", serif;
    color: #0d1570;
}

.bm-blank {
    width: 21px;
}

/* app area below the browser chrome */
.app {
    flex: 1;
    min-height: 0;
    display: flex;
}

.chat {
    flex: none;
    width: 576px;
    display: flex;
    flex-direction: column;
    padding: 0 13px 10px 10px;
    color: #2f2f2d;
}

.chat-head {
    flex: none;
    height: 64px;
    display: flex;
    align-items: center;
    padding-left: 10px;
}

.chat-logo {
    margin-right: 10px;
}

.project {
    font-size: 17px;
    font-weight: 600;
    color: #1a1a1a;
    margin-right: 9px;
}

.head-history {
    margin-left: auto;
    margin-right: 23px;
    color: #222;
}

.head-side {
    margin-right: 14px;
    color: #222;
}

.bubble {
    align-self: flex-end;
    margin: 10px 10px 0 0;
    height: 60px;
    padding: 0 16px;
    border-radius: 18px;
    background: #f7f3ee;
    display: flex;
    align-items: center;
    font-size: 19.5px;
    color: #222;
}

.who {
    display: flex;
    align-items: center;
    margin: 27.5px 0 0 11px;
    gap: 13px;
}

.who-name {
    font-size: 19.5px;
    font-weight: 600;
    color: #555;
}

.who-more {
    margin-left: auto;
    margin-right: 20px;
    color: #777;
    font-size: 16px;
}

.thought {
    display: flex;
    align-items: center;
    gap: 15px;
    margin: 26.5px 0 0 42px;
    font-size: 16.5px;
    color: #6e6e6a;
}

.msg {
    margin: 27px 10px 0 42px;
    font-size: 19.35px;
    line-height: 32.7px;
    color: #3a3a38;
}

.edits {
    display: flex;
    align-items: center;
    margin: 20px 10px 0 42px;
    font-size: 16.5px;
    color: #6e6e6a;
}

.edits-text {
    margin-left: 15px;
}

.show-all {
    margin-left: auto;
    height: 32px;
    padding: 0 8px;
    display: flex;
    align-items: center;
    background: #f7f3ee;
    border: 1px solid #ece8e1;
    border-radius: 8px;
    color: #222;
    font-size: 17px;
}

.msg.second {
    margin-top: 21px;
}

.version-row {
    display: flex;
    margin: 20.5px 0 0 42px;
    gap: 17px;
    align-items: flex-start;
    color: #555;
}

.version-row>svg {
    margin-top: 18px;
}

.version {
    position: relative;
    width: 418px;
    height: 96px;
    padding: 19px 16px 0;
    background: #d0dcf8;
    border: 1.5px solid #2c66ee;
    border-radius: 14px;
    color: #222;
}

.version-top {
    display: flex;
    align-items: center;
    justify-content: space-between;
    padding-right: 5px;
    font-size: 17px;
}

.version-top strong {
    font-weight: 600;
}

.version-sub {
    display: block;
    margin-top: 13px;
    font-size: 17px;
}

/* sits over the card's bottom edge */
.version-actions {
    position: absolute;
    left: 240px;
    top: 78px;
    width: 187px;
    height: 34px;
    padding: 0 10px 0 13px;
    display: flex;
    align-items: center;
    justify-content: space-between;
    background: #f7f3ee;
    border: 1px solid #ece8e1;
    border-radius: 9px;
    font-size: 14.5px;
}

.restore,
.code {
    display: flex;
    align-items: center;
    gap: 6px;
}

.restore {
    color: #8d8d89;
}

.msg-actions {
    display: flex;
    justify-content: flex-end;
    gap: 14.5px;
    margin: 48.5px 15px 0 0;
    color: #555;
}

.composer {
    margin-top: auto;
    height: 137px;
    padding: 0 15px 16px 16px;
    display: flex;
    flex-direction: column;
    background: #f7f3ee;
    border: 1px solid #eeeae4;
    border-radius: 34px;
}

.ask {
    margin-top: 25px;
    margin-left: 5px;
    font-size: 19px;
    color: #5d5d59;
}

.composer-bar {
    margin-top: auto;
    display: flex;
    align-items: center;
    gap: 5px;
}

.round {
    width: 31px;
    height: 31px;
    border-radius: 50%;
    border: 1px solid #e8e4dd;
    display: flex;
    align-items: center;
    justify-content: center;
    color: #666;
}

.chip {
    height: 31px;
    padding: 0 10px;
    border-radius: 16px;
    border: 1px solid #e8e4dd;
    display: flex;
    align-items: center;
    gap: 7px;
    font-size: 17.5px;
    color: #555;
}

.edit-chip {
    margin-right: auto;
}

.send {
    width: 31px;
    height: 31px;
    border-radius: 50%;
    background: #85847f;
    display: flex;
    align-items: center;
    justify-content: center;
    margin-left: 1px;
}

.stage {
    flex: 1;
    min-width: 0;
    display: flex;
    flex-direction: column;
    padding: 0 6px 11px 0;
}

.stage-bar {
    flex: none;
    height: 65px;
    display: flex;
    align-items: center;
    padding: 0 9px;
}

.code-btn {
    width: 36px;
    height: 35px;
    border: 1px solid #e5e3dd;
    border-radius: 8px;
    display: flex;
    align-items: center;
    justify-content: center;
    color: #333;
}

.addr {
    width: 326px;
    height: 40px;
    margin-left: 448px;
    padding: 0 13px;
    display: flex;
    align-items: center;
    border: 1px solid #e8e6e0;
    border-radius: 20px;
    color: #333;
}

.addr-text {
    margin-left: 17px;
    font-size: 17px;
    color: #222;
}

.addr-out {
    margin-left: auto;
    margin-right: 17px;
}

.invite {
    margin-left: auto;
    height: 36px;
    padding-right: 12px;
    display: flex;
    align-items: center;
    gap: 9px;
    background: #f5f2ec;
    border-radius: 18px;
    font-size: 17.5px;
    font-weight: 500;
}

.avatar {
    width: 28px;
    height: 28px;
    border-radius: 50%;
    background: #5146d8;
    color: #fff;
    display: flex;
    align-items: center;
    justify-content: center;
    font-size: 14px;
}

.bolt {
    margin-left: 14px;
    width: 31px;
    height: 36px;
    background: #f5f2ec;
    border-radius: 9px;
    display: flex;
    align-items: center;
    justify-content: center;
}

.github {
    margin: 0 12.5px 0 17px;
}

.publish {
    width: 93px;
    height: 37px;
    background: #1d6fe8;
    color: #fff;
    border-radius: 8px;
    display: flex;
    align-items: center;
    justify-content: center;
    font-size: 17px;
    font-weight: 600;
}

/* dimmed page behind the dialog */
.preview {
    position: relative;
    flex: 1;
    min-height: 0;
    overflow: hidden;
    background: #343434;
    border-radius: 14px;
    color: #1c1c1c;
}

.dark-nav {
    height: 50px;
    display: grid;
    grid-template-columns: 98px 137px 122px 100px 120px 86px 97px 108px 139px 109px 131px 60px;
    padding-left: 37px;
    align-items: start;
    font-size: 18px;
    font-weight: 500;
    line-height: 30px;
    overflow: hidden;
}

.dark-nav span {
    margin-top: 17px;
    width: 80px;
}

.dark-nav span:nth-child(4),
.dark-nav span:nth-child(6),
.dark-nav span:nth-child(7),
.dark-nav span:nth-child(11),
.dark-nav span:nth-child(12) {
    margin-top: 4px;
}

.dark-nav span.on {
    position: relative;
    z-index: 0;
    color: #0e0e0e;
    font-weight: 600;
}

.dark-nav span.on::before {
    content: "";
    position: absolute;
    inset: -9px -14px -20px;
    background: #303030;
    border-radius: 8px;
    z-index: -1;
}

.dark-list {
    margin: 755px 21px 0;
    height: 51px;
    border: 1px solid #2c2c2c;
    border-width: 0 1px;
    padding: 0 32px;
}

.dark-row {
    height: 100%;
    border: 1px solid #2c2c2c;
    border-width: 0 1px;
    padding: 0 0 0 16px;
    display: flex;
    align-items: flex-start;
    font-size: 18px;
    overflow: hidden;
}

.dark-check {
    width: 20px;
    height: 21px;
    margin: 0 15px 0 0;
    border: 1.5px solid #111;
    border-radius: 4px;
    flex: none;
}

.dark-info {
    line-height: 24px;
    margin-top: -5px;
    flex: 1;
    white-space: nowrap;
}

.dark-small {
    font-size: 16px;
    line-height: 22px;
    color: #222;
}

.dark-pill {
    width: 98px;
    height: 27px;
    line-height: 22px;
    text-align: center;
    font-weight: 600;
    font-size: 16.5px;
    background: #303030;
    border-radius: 0 0 10px 10px;
    color: #111;
}

.dark-caret {
    margin: 0 32px 0 17px;
}

.dark-row .ico:not(.dark-caret) {
    margin: 0 25px 0 0;
}

.d-gear {
    color: #20407c;
}

.d-edit {
    color: #111;
}

.d-eye {
    color: #7a2f10;
}

.d-trash {
    color: #4f1212;
}

/* dialog */
.modal {
    position: absolute;
    left: 0;
    right: 0;
    top: 50px;
    height: 757px;
    background: #fff;
    border-radius: 10px;
    border-bottom: 1px solid #dfe5ee;
    color: #0f172a;
    display: flex;
    flex-direction: column;
    box-shadow: 0 4px 14px rgba(0, 0, 0, .2);
}

.modal-head {
    position: relative;
    flex: none;
    height: 110px;
    padding: 31px 32px 0;
}

.modal-head h2 {
    font-size: 23px;
    font-weight: 600;
    letter-spacing: -.4px;
}

.modal-head p {
    margin-top: 6.5px;
    font-size: 18.2px;
    color: #5f6775;
}

.modal-x {
    position: absolute;
    right: 22px;
    top: 22px;
    color: #4b5563;
}

.modal-scroll {
    height: 615px;
    padding: 0 111px 0 32px;
    overflow: hidden;
}

.modal-card {
    height: 100%;
    padding: 0 32px;
    border: 1px solid #e6ebf2;
    border-width: 0 1px;
    width: 1170px;
}

.tabs {
    height: 42px;
    display: grid;
    grid-template-columns: repeat(5, 1fr);
    padding: 0 6px 5px;
    background: #f1f3f5;
    border-radius: 0 0 6px 6px;
    font-size: 18.3px;
    font-weight: 500;
    color: #5f6b7a;
    text-align: center;
}

.tabs span {
    padding-top: 5px;
}

.tabs .active {
    background: #fff;
    color: #0f172a;
    border-radius: 0 0 4px 4px;
    box-shadow: 0 1px 2px rgba(0, 0, 0, .12);
}

.source-head {
    display: flex;
    justify-content: space-between;
    align-items: flex-start;
    margin-top: 37px;
}

.source-head h3 {
    margin-top: -1px;
    font-size: 24.2px;
    font-weight: 600;
    letter-spacing: -.4px;
}

.source-head p {
    margin-top: 6px;
    font-size: 18.2px;
    color: #5f6775;
}

.source-btns {
    display: flex;
    gap: 11px;
}

.btn {
    height: 53px;
    display: flex;
    align-items: center;
    border-radius: 8px;
    font-size: 18.2px;
    font-weight: 500;
}

.btn svg {
    margin-right: 21px;
}

.btn.outline {
    width: 251px;
    padding-left: 22px;
    background: #fff;
    border: 1px solid #e2e8f0;
    color: #0f172a;
}

.btn.solid {
    width: 185px;
    padding-left: 22px;
    background: #2a4a6e;
    color: #fff;
}

.form-card {
    margin-top: 22px;
    height: 510px;
    padding: 28px 32px 0 31px;
    border: 1px solid #e2e8f0;
    border-radius: 10px;
}

.form-card h3 {
    font-size: 31.5px;
    font-weight: 600;
    letter-spacing: -.8px;
    line-height: 38px;
}

.form-two {
    display: grid;
    grid-template-columns: 509px 509px;
    gap: 22px;
    margin-top: 32px;
}

.field {
    display: flex;
    flex-direction: column;
}

.form-card>.field {
    margin-top: 26px;
}

.field label {
    font-size: 18.2px;
    font-weight: 500;
    line-height: 22px;
    margin-bottom: 5px;
}

.input {
    height: 51px;
    padding: 0 16px;
    display: flex;
    align-items: center;
    border: 1px solid #e2e8f0;
    border-radius: 7px;
    font-size: 18.3px;
    color: #0f172a;
}

.input.ph {
    color: #5f6775;
}

.select {
    justify-content: space-between;
}

.select svg {
    color: #64748b;
}

.form-btns {
    display: flex;
    gap: 11px;
    margin-top: 22px;
}

.btn.plain {
    justify-content: center;
    padding: 0;
    height: 50px;
}

.btn.solid.plain {
    width: 144px;
}

.btn.outline.plain {
    width: 105px;
}

/* sparkle button floats over the window corner */
.float-star {
    position: absolute;
    left: 1861px;
    top: 1008px;
    width: 45px;
    height: 45px;
    border-radius: 50%;
    box-shadow: -2px 2px 10px rgba(0, 0, 0, .22);
}

/* dock */
.dock {
    position: relative;
    flex: none;
    width: 1825px;
    height: 86px;
    margin: 10px 0 0 47px;
    padding: 19px 0 0 18px;
    display: flex;
    align-items: flex-start;
    gap: 17.75px;
    background: #3e3e41;
    border: 1px solid #66666a;
    border-radius: 26px;
}

.dock>svg,
.dock-cal {
    flex: none;
    width: 48px;
    height: 48px;
}

.dock-cal {
    position: relative;
}

.dock-cal svg {
    width: 48px;
    height: 48px;
    display: block;
}

.badge {
    position: absolute;
    right: -5px;
    top: -7px;
    width: 23px;
    height: 23px;
    border-radius: 50%;
    background: #ee3a36;
    color: #fff;
    display: flex;
    align-items: center;
    justify-content: center;
    font-size: 13px;
    font-weight: 500;
}

.cal-day {
    font: 700 10px Inter, sans-serif;
    fill: #e8403a;
    text-anchor: middle;
}

.cal-num {
    font: 400 28px Inter, sans-serif;
    fill: #222;
    text-anchor: middle;
}

.canva {
    font: italic 500 13px "Liberation Serif", serif;
    fill: #fff;
    text-anchor: middle;
}

.ls {
    font: italic 700 27px "Liberation Sans", sans-serif;
    fill: #ee5a22;
    text-anchor: middle;
}

.m365 {
    font: 700 9px "Liberation Mono", monospace;
    fill: #fff;
    text-anchor: middle;
}

.word {
    font: 600 14px "Liberation Sans", sans-serif;
    fill: #fff;
    text-anchor: middle;
}

.dock-sep {
    flex: none;
    width: 1px;
    height: 64px;
    margin: -8px 5px 0 7px;
    background: #1f1f20;
}

.dock>.trash {
    margin-left: -2px;
}

.dot {
    position: absolute;
    top: 74px;
    width: 5px;
    height: 5px;
    border-radius: 50%;
    background: #0a0a0a;
}

.dot-a {
    left: 40px;
}

.dot-b {
    left: 895px;
}

.dot-c {
    left: 961px;
}
```
